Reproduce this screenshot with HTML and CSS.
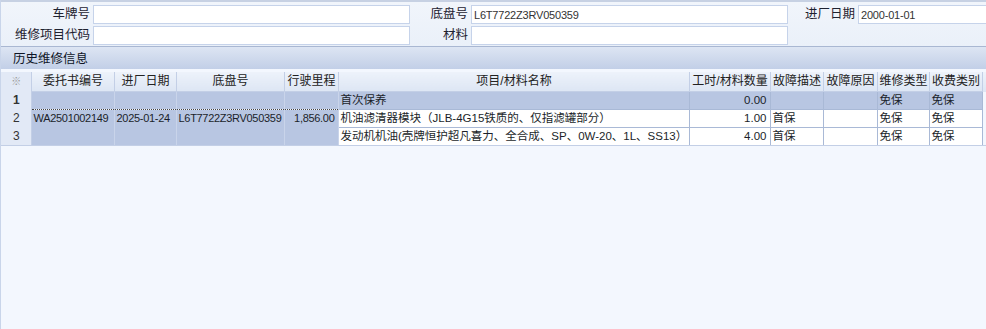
FILE: index.html
```html
<!DOCTYPE html>
<html lang="zh-CN">
<head>
    <meta charset="UTF-8">
    <title>历史维修信息</title>
    <link rel="stylesheet" href="styles.css">
</head>
<body>

    <!-- 查询条件 -->
    <div class="query">
        <label>车牌号</label>
        <input type="text" value="">
        <label>底盘号</label>
        <input type="text" value="L6T7722Z3RV050359">
        <label>进厂日期</label>
        <input type="text" value="2000-01-01">

        <label>维修项目代码</label>
        <input type="text" value="">
        <label>材料</label>
        <input type="text" value="">
    </div>

    <div class="section-title">历史维修信息</div>

    <!-- 维修记录表 -->
    <table class="grid">
        <colgroup>
            <col style="width:30px">
            <col style="width:83px">
            <col style="width:62px">
            <col style="width:108px">
            <col style="width:54px">
            <col style="width:351px">
            <col style="width:81px">
            <col style="width:53px">
            <col style="width:54px">
            <col style="width:52px">
            <col style="width:53px">
            <col>
        </colgroup>
        <thead>
            <tr>
                <th class="ind">※</th>
                <th>委托书编号</th>
                <th>进厂日期</th>
                <th>底盘号</th>
                <th>行驶里程</th>
                <th>项目/材料名称</th>
                <th>工时/材料数量</th>
                <th>故障描述</th>
                <th>故障原因</th>
                <th>维修类型</th>
                <th>收费类别</th>
                <th class="filler"></th>
            </tr>
        </thead>
        <tbody>
            <tr class="selected">
                <td class="ind"><b>1</b></td>
                <td class="fixed"></td>
                <td class="fixed"></td>
                <td class="fixed"></td>
                <td class="fixed"></td>
                <td>首次保养</td>
                <td class="num">0.00</td>
                <td></td>
                <td></td>
                <td>免保</td>
                <td>免保</td>
                <td class="filler"></td>
            </tr>
            <tr>
                <td class="ind">2</td>
                <td class="fixed">WA2501002149</td>
                <td class="fixed">2025-01-24</td>
                <td class="fixed">L6T7722Z3RV050359</td>
                <td class="fixed num">1,856.00</td>
                <td>机油滤清器模块（JLB-4G15铁质的、仅指滤罐部分）</td>
                <td class="num">1.00</td>
                <td>首保</td>
                <td></td>
                <td>免保</td>
                <td>免保</td>
                <td class="filler"></td>
            </tr>
            <tr>
                <td class="ind">3</td>
                <td class="fixed"></td>
                <td class="fixed"></td>
                <td class="fixed"></td>
                <td class="fixed"></td>
                <td>发动机机油(壳牌恒护超凡喜力、全合成、SP、0W-20、1L、SS13）</td>
                <td class="num">4.00</td>
                <td>首保</td>
                <td></td>
                <td>免保</td>
                <td>免保</td>
                <td class="filler"></td>
            </tr>
        </tbody>
    </table>

</body>
</html>
```

FILE: styles.css
```css
body {
    margin: 0;
    background-color: #f3f7fe;
    border-left: 1px solid #c9d5ea;
    height: 329px;
    box-sizing: border-box;
    font-family: "Liberation Sans", "Noto Sans CJK SC", sans-serif;
    font-size: 12px;
    color: #1b1f2a;
    overflow: hidden;
}

/* 查询条件区域 */
.query {
    display: grid;
    grid-template-columns: 89px 317px 55px 317px 64px 1fr;
    grid-auto-rows: 19px;
    column-gap: 3px;
    row-gap: 2px;
    padding: 3px 0 1px;
    border-top: 2px solid #c7d1e3;
    background: linear-gradient(#f1f5fb, #eaf0f9);
}

.query label {
    text-align: right;
    line-height: 19px;
    font-size: 12.5px;
    color: #1e2230;
}

.query input {
    margin: 0;
    height: 19px;
    box-sizing: border-box;
    border: 1px solid #c6d3ea;
    background-color: #fff;
    padding: 0 2px;
    font-family: "Liberation Sans", sans-serif;
    font-size: 11px;
    letter-spacing: -0.2px;
    color: #333;
}

/* 标题栏 */
.section-title {
    height: 19px;
    line-height: 18px;
    padding: 3px 0 0 12px;
    border-top: 1px solid #a9b7d2;
    background: linear-gradient(#dde5f3, #c2cfe7);
    margin-bottom: 3px;
    font-size: 12.5px;
    color: #0e1526;
}

/* 表格 */
.grid {
    border-collapse: collapse;
    table-layout: fixed;
    width: 986px;
}

.grid th,
.grid td {
    height: 17px;
    padding: 0 1px 0 2px;
    white-space: nowrap;
    overflow: hidden;
    font-weight: normal;
    line-height: 17px;
}

.grid td {
    font-size: 11.5px;
    background-color: #fff;
    border: 1px solid #a9b9d6;
}

.grid th {
    height: 19px;
    text-align: center;
    background: linear-gradient(#edf2fa, #dde6f4);
    border-right: 1px solid #c3cfe6;
    border-bottom: 1px solid #c3cfe6;
    color: #222;
}

.grid .ind {
    text-align: center;
    background: #e2e9f6;
    border: none;
    border-right: 1px solid #c3cfe6;
    font-size: 12px;
    color: #333;
}

.grid th.ind {
    color: #999;
    font-size: 10px;
}

.grid td.fixed {
    font-size: 11px;
    letter-spacing: -0.3px;
    background-color: #b8c6e2;
    border: none;
    border-right: 1px solid #c9d4ea;
}

.grid .num {
    text-align: right;
    padding-right: 3px;
}

.grid .filler {
    background: #f3f7fe;
    border: none;
}

.grid th.filler {
    background: linear-gradient(#edf2fa, #dde6f4);
}

/* 当前选中行 */
.grid tr.selected td {
    background-color: #b8c6e2;
    border-top: 1px dotted #444;
    border-bottom: 1px dotted #444;
}

.grid tr.selected td.ind {
    background: #e2e9f6;
    border-top: none;
    border-bottom: none;
}

.grid tr.selected td.filler {
    background: #f3f7fe;
    border: none;
}

.grid tbody tr:last-child td {
    border-bottom: 1px solid #c3cfe6;
}
```
